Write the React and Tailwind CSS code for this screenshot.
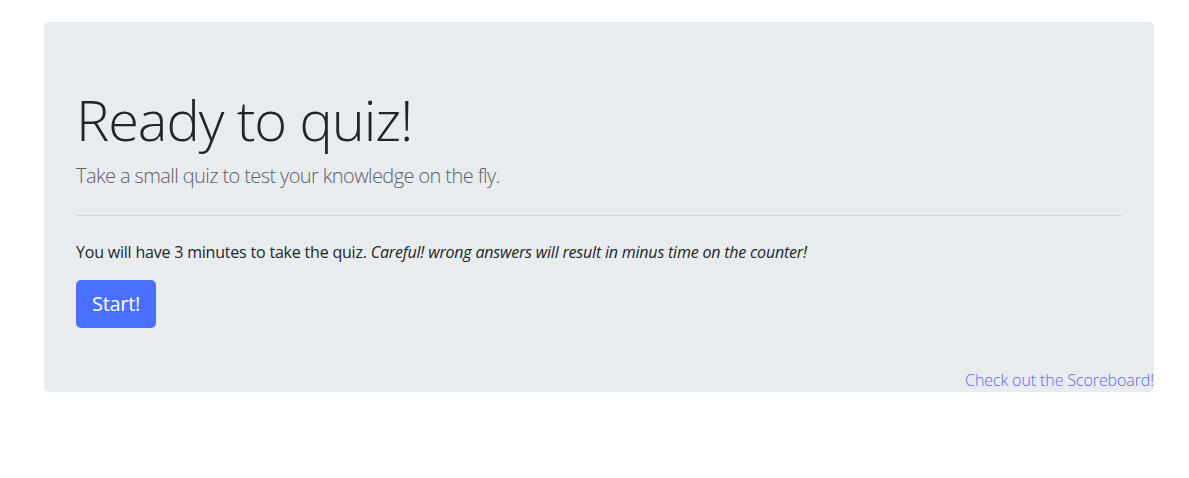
import React from 'react';

export default function App() {
  return (
    <div className="min-h-screen bg-white pt-[22px] pl-[44px] font-['Open_Sans',sans-serif] text-[#212529]">
      <div className="relative w-[1110px] rounded-[5px] bg-[#e9ecef] px-8 py-16">
        <h1 className="mb-2 text-[56px] font-light leading-[1.2] tracking-[-1.1px]">Ready to quiz!</h1>
        <p className="text-[20px] font-light leading-normal tracking-[-0.6px] text-[#5a6168]">
          Take a small quiz to test your knowledge on the fly.
        </p>
        <hr className="my-6 border-t border-[#d3d6d9]" />
        <p className="mb-4 text-base leading-6 tracking-[-0.2px]">
          You will have 3 minutes to take the quiz.{' '}
          <em>Careful! wrong answers will result in minus time on the counter!</em>
        </p>
        <button className="h-12 w-20 rounded-[5px] bg-[#4a6fff] text-[20px] tracking-[-0.3px] text-white">
          Start!
        </button>
        <a href="#" className="absolute bottom-0 right-0 text-base font-light leading-6 tracking-[-0.1px] text-[#6464f0]">
          Check out the Scoreboard!
        </a>
      </div>
    </div>
  );
}
